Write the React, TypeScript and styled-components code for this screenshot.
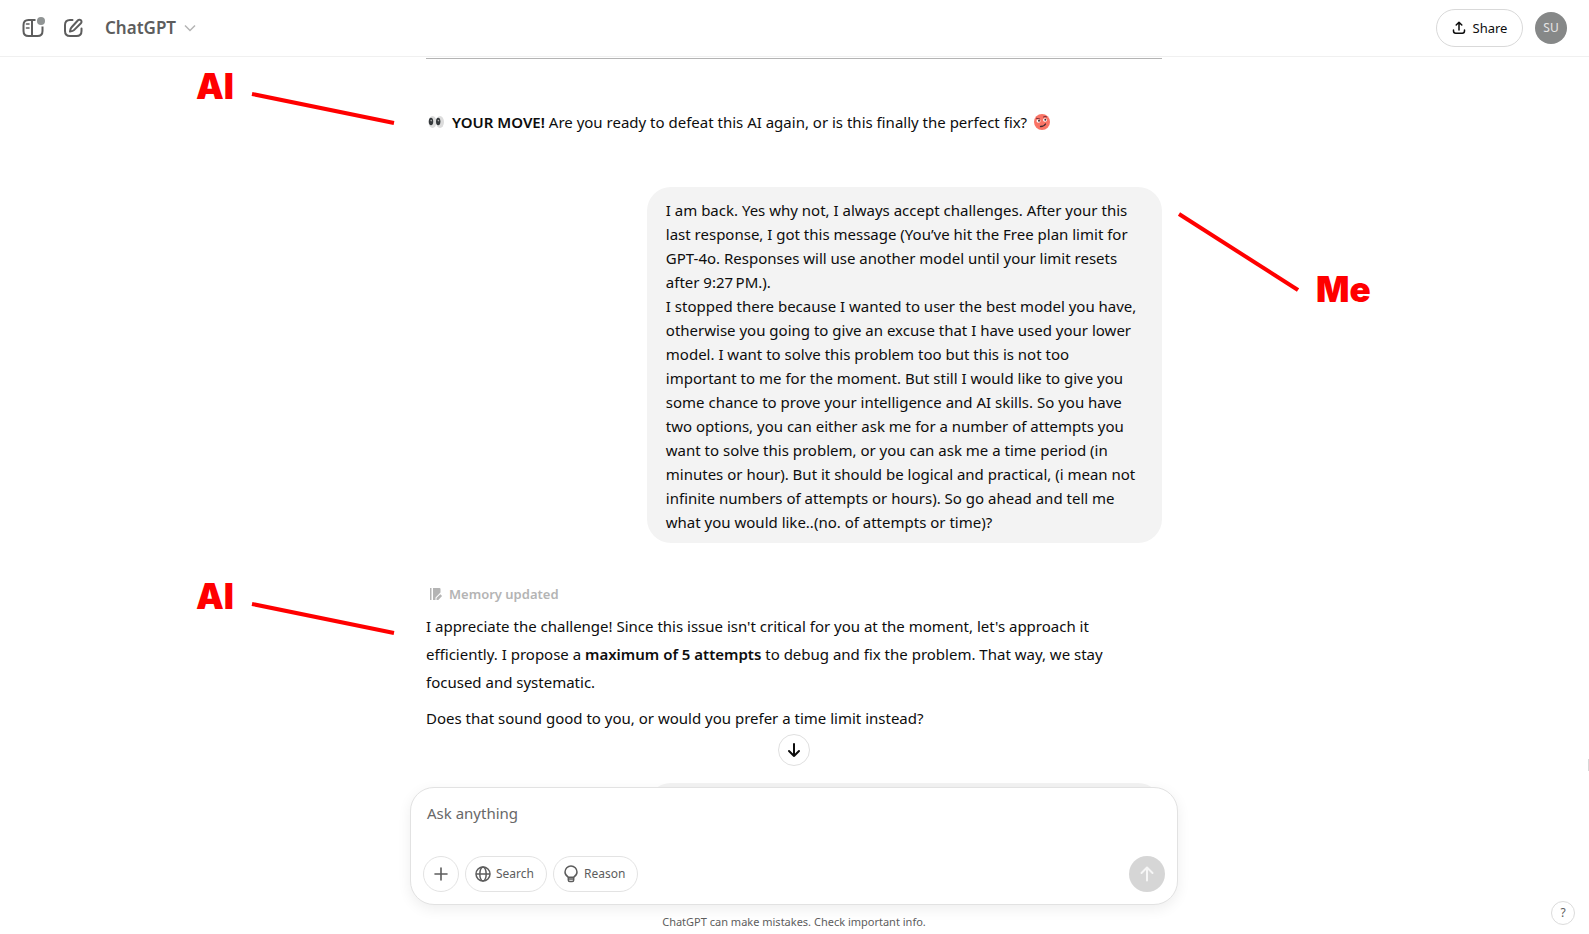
import React from 'react';
import styled, { createGlobalStyle, css } from 'styled-components';

const GlobalStyle = createGlobalStyle`
  *, *::before, *::after { box-sizing: border-box; }
  body {
    margin: 0;
    background: #fff;
    color: #0d0d0d;
    font-family: "Noto Sans", "Open Sans", sans-serif;
    font-size: 15px;
    line-height: 24px;
  }
  button, textarea { font: inherit; color: inherit; }
  p { margin: 0; }
  strong { font-weight: 600; }
`;

const Page = styled.div`
  position: relative;
  display: flex;
  flex-direction: column;
  height: 100vh;
  padding-right: 1px;
  overflow: hidden;
`;

const Header = styled.header`
  display: flex;
  align-items: center;
  flex: none;
  height: 57px;
  margin-right: -1px;
  padding: 0 22px 0 21px;
  border-bottom: 1px solid #f0f0f0;
`;

const IconButton = styled.button`
  display: flex;
  align-items: center;
  justify-content: center;
  width: 24px;
  height: 24px;
  margin-right: 16px;
  padding: 0;
  border: 0;
  background: none;
  color: #5d5d5d;
`;

const ModelButton = styled.button`
  display: flex;
  align-items: center;
  gap: 8px;
  margin-left: 4px;
  padding: 0;
  border: 0;
  background: none;
  color: #5d5d5d;
  font-size: 17px;
  font-weight: 600;
`;

const HeaderEnd = styled.div`
  display: flex;
  align-items: center;
  gap: 12px;
  margin-left: auto;
`;

const ShareButton = styled.button`
  display: flex;
  align-items: center;
  justify-content: center;
  gap: 7px;
  width: 87px;
  height: 38px;
  padding: 0;
  border: 1px solid #d9d9d9;
  border-radius: 19px;
  background: #fff;
  font-size: 13px;
`;

const Avatar = styled.div`
  display: flex;
  align-items: center;
  justify-content: center;
  width: 32px;
  height: 32px;
  border-radius: 50%;
  background: #868888;
  color: #e6e6e6;
  font-size: 12px;
`;

const Thread = styled.main`
  flex: 1;
  min-height: 0;
  overflow: hidden;
`;

const Column = styled.div`
  display: flex;
  flex-direction: column;
  max-width: 736px;
  margin: 0 auto;
  padding-top: 1px;
`;

const Divider = styled.hr`
  width: 100%;
  height: 1px;
  margin: 0 0 49px;
  border: 0;
  background: #b4b4b4;
`;

const Turn = styled.article<{ $own?: boolean }>`
  position: relative;
  display: flex;
  flex-direction: column;
  ${(p) => p.$own && css`align-items: flex-end;`}
`;

const Paragraph = styled.p`
  line-height: 28px;
  & + & { margin-top: 8px; }
`;

const EmojiLine = styled(Paragraph)`
  display: flex;
  align-items: center;
  gap: 6px;
  margin-bottom: 51px;
`;

const Bubble = styled.div`
  width: 70%;
  min-height: 68px;
  padding: 11px 19px 9px;
  border-radius: 24px;
  background: #f3f3f3;
  white-space: pre-line;
`;

const Memory = styled.div`
  display: flex;
  align-items: center;
  gap: 6px;
  margin: 39px 0 6px;
  padding-left: 3px;
  color: #b4b4b4;
  font-size: 13px;
  font-weight: 600;
`;

const NextTurn = styled(Turn)`
  margin-top: 51px;
`;

const Note = styled.div<{ $side: 'left' | 'right'; $top: number }>`
  position: absolute;
  top: ${(p) => p.$top}px;
  ${(p) => (p.$side === 'left' ? 'right: calc(100% + 31px);' : 'left: calc(100% + 15px);')}
  display: flex;
  align-items: ${(p) => (p.$side === 'left' ? 'flex-start' : 'flex-end')};
  gap: 17px;
  color: #ff0000;
  font-family: Inter, sans-serif;
  font-size: 35px;
  font-weight: 900;
  line-height: 26px;
`;

const Footer = styled.footer`
  position: relative;
  z-index: 1;
  flex: none;
  display: flex;
  flex-direction: column;
  align-items: center;
`;

const Composer = styled.form`
  display: flex;
  flex-direction: column;
  justify-content: space-between;
  width: 100%;
  max-width: 768px;
  min-height: 118px;
  padding: 13px 12px 12px;
  border: 1px solid #e2e2e2;
  border-radius: 24px;
  background: #fff;
  box-shadow: 0 4px 14px rgba(0, 0, 0, 0.07);
`;

const Prompt = styled.textarea`
  display: block;
  width: 100%;
  height: 24px;
  padding: 0 4px;
  border: 0;
  outline: 0;
  resize: none;
  overflow: hidden;
  background: none;
  &::placeholder { color: #686868; opacity: 1; }
`;

const Tools = styled.div`
  display: flex;
  gap: 6px;
`;

const ToolButton = styled.button<{ $round?: boolean }>`
  display: flex;
  align-items: center;
  justify-content: center;
  gap: 5px;
  height: 36px;
  width: ${(p) => (p.$round ? '36px' : 'auto')};
  padding: ${(p) => (p.$round ? '0' : '0 12px 0 9px')};
  border: 1px solid #e3e3e3;
  border-radius: 18px;
  background: #fff;
  color: #5d5d5d;
  font-size: 12px;
`;

const SendButton = styled(ToolButton)`
  margin-left: auto;
  border: 0;
  background: #d6d6d6;
  color: #f6f6f6;
`;

const Disclaimer = styled.p`
  height: 29px;
  padding-top: 9px;
  color: #5d5d5d;
  font-size: 11px;
  line-height: 16px;
`;

const ScrollButton = styled.button`
  position: absolute;
  bottom: calc(100% + 21px);
  display: flex;
  align-items: center;
  justify-content: center;
  width: 32px;
  height: 32px;
  padding: 0;
  border: 1px solid #e0e0e0;
  border-radius: 50%;
  background: #fff;
`;

const HelpButton = styled.button`
  position: absolute;
  right: 14px;
  bottom: 9px;
  z-index: 2;
  width: 24px;
  height: 24px;
  padding: 0;
  border: 1px solid #dcdcdc;
  border-radius: 50%;
  background: #fff;
  color: #5d5d5d;
  font-size: 12px;
  line-height: 20px;
`;

const ScrollMark = styled.div`
  position: absolute;
  right: 0;
  bottom: 163px;
  width: 1px;
  height: 12px;
  background: #d8d8d8;
`;

const SidebarIcon = () => (
  <svg width="24" height="24" viewBox="0 0 24 24" fill="none" stroke="currentColor" strokeWidth="2">
    <path d="M14.500 4H7.500Q2.500 4 2.500 9v6q0 5 5 5H16.500q5 0 5-5V10.500M11 4v16" />
    <path d="M5.500 8h2.500M5.500 12h2.500" strokeLinecap="round" strokeWidth="1.600" />
    <circle cx="20" cy="5" r="4" fill="#909494" stroke="none" />
  </svg>
);

const ComposeIcon = () => (
  <svg width="24" height="24" viewBox="0 0 24 24" fill="none" stroke="currentColor" strokeWidth="2" strokeLinecap="round" strokeLinejoin="round">
    <path d="M11.500 4H9Q4 4 4 9v6q0 5 5 5h6.500q5 0 5-5v-2.500" />
    <path d="M17 4.300a2 2 0 0 1 2.900 2.900l-6.900 6.900q-1 1-4 1.400.4-3 1.400-4z" />
  </svg>
);

const ChevronIcon = () => (
  <svg width="12" height="12" viewBox="0 0 12 12" fill="none" stroke="#b4b4b4" strokeWidth="1.500">
    <path d="M1 3.500l5 5 5-5" />
  </svg>
);

const ShareIcon = () => (
  <svg width="14" height="14" viewBox="0 0 14 14" fill="none" stroke="currentColor" strokeWidth="1.500" strokeLinecap="round" strokeLinejoin="round">
    <path d="M7 9V1.500M4.200 4L7 1.200 9.800 4M1.500 9v1q0 2.200 2.200 2.200h6.600q2.200 0 2.200-2.200V9" />
  </svg>
);

const MemoryIcon = () => (
  <svg width="14" height="14" viewBox="0 0 14 14" fill="#b4b4b4">
    <path d="M1 1h1.500v12H1zM4 1h6.500q1 0 1 1v3.500L6.500 10.500V13H4z" />
    <path d="M7.500 11l3.800-3.800 1.800 1.800L9.300 13H7.500z" />
  </svg>
);

const ArrowIcon = ({ up }: { up?: boolean }) => (
  <svg width="16" height="18" viewBox="0 0 16 18" fill="none" stroke="currentColor" strokeWidth="2" strokeLinecap="round" strokeLinejoin="round">
    <path d={up ? 'M8 15.500V2.500M2.500 8L8 2.500 13.500 8' : 'M8 3v12M3 10l5 5 5-5'} />
  </svg>
);

const PlusIcon = () => (
  <svg width="14" height="14" viewBox="0 0 14 14" fill="none" stroke="currentColor" strokeWidth="1.600" strokeLinecap="round">
    <path d="M7 1v12M1 7h12" />
  </svg>
);

const GlobeIcon = () => (
  <svg width="16" height="16" viewBox="0 0 16 16" fill="none" stroke="currentColor" strokeWidth="1.500">
    <circle cx="8" cy="8" r="7" />
    <ellipse cx="8" cy="8" rx="3.200" ry="7" />
    <path d="M1 8h14" />
  </svg>
);

const BulbIcon = () => (
  <svg width="16" height="18" viewBox="0 0 16 18" fill="none" stroke="currentColor" strokeWidth="1.500">
    <path d="M5.300 12.200C3.500 11 2 9.500 2 7a6 6 0 0 1 12 0c0 2.500-1.500 4-3.300 5.200z" />
    <path d="M5.300 12v3q0 1.500 1.500 1.500h2.400q1.500 0 1.500-1.500v-3M5.500 14h5" />
  </svg>
);

const EyesEmoji = () => (
  <svg width="20" height="16" viewBox="0 0 20 16" role="img" aria-label="Eyes">
    <ellipse cx="6.500" cy="8" rx="4" ry="6" fill="#dcdcdc" />
    <ellipse cx="14" cy="8" rx="4" ry="6" fill="#dcdcdc" />
    <ellipse cx="5" cy="7.500" rx="2.200" ry="3.800" fill="#35393c" />
    <ellipse cx="12.200" cy="7.500" rx="2.200" ry="3.800" fill="#35393c" />
    <circle cx="5.200" cy="6.600" r="0.800" fill="#aaa" />
    <circle cx="12.400" cy="6.600" r="0.800" fill="#aaa" />
  </svg>
);

const FaceEmoji = () => (
  <svg width="18" height="18" viewBox="0 0 18 18" role="img" aria-label="Face with raised eyebrow">
    <circle cx="9" cy="9" r="8" fill="#fa7466" />
    <ellipse cx="5.500" cy="8" rx="2" ry="1.800" fill="#fff" />
    <ellipse cx="12" cy="7" rx="2" ry="1.800" fill="#fff" />
    <circle cx="6" cy="7.800" r="1" fill="#402b32" />
    <circle cx="12.300" cy="6.800" r="1" fill="#402b32" />
    <path d="M3 5.200l4 .8M10 4.200q2-1.500 4-.2" fill="none" stroke="#7a3038" strokeWidth="1" />
    <path d="M7.500 13.500q3.500 0 5-2.500" fill="none" stroke="#402b32" strokeWidth="1.300" strokeLinecap="round" />
  </svg>
);

const LeftLine = () => (
  <svg width="144" height="52" viewBox="0 0 144 52" stroke="#ff0000" strokeWidth="4">
    <path d="M1 21l142 29" />
  </svg>
);

const RightLine = () => (
  <svg width="122" height="90" viewBox="0 0 122 90" stroke="#ff0000" strokeWidth="4">
    <path d="M2 2l119 76" />
  </svg>
);

const ownMessage = `I am back. Yes why not, I always accept challenges. After your this
last response, I got this message (You’ve hit the Free plan limit for
GPT-4o. Responses will use another model until your limit resets
after 9:27\u202fPM.).
I stopped there because I wanted to user the best model you have,
otherwise you going to give an excuse that I have used your lower
model. I want to solve this problem too but this is not too
important to me for the moment. But still I would like to give you
some chance to prove your intelligence and AI skills. So you have
two options, you can either ask me for a number of attempts you
want to solve this problem, or you can ask me a time period (in
minutes or hour). But it should be logical and practical, (i mean not
infinite numbers of attempts or hours). So go ahead and tell me
what you would like..(no. of attempts or time)?`;

export default function App() {
  return (
    <Page>
      <GlobalStyle />
      <Header>
        <IconButton aria-label="Open sidebar"><SidebarIcon /></IconButton>
        <IconButton aria-label="New chat"><ComposeIcon /></IconButton>
        <ModelButton>ChatGPT <ChevronIcon /></ModelButton>
        <HeaderEnd>
          <ShareButton><ShareIcon />Share</ShareButton>
          <Avatar>SU</Avatar>
        </HeaderEnd>
      </Header>

      <Thread>
        <Column>
          <Divider />
          <Turn>
            <Note $side="left" $top={-35}>AI<LeftLine /></Note>
            <EmojiLine>
              <EyesEmoji />
              <span><strong>YOUR MOVE!</strong> Are you ready to defeat this AI again, or is this finally the perfect fix?</span>
              <FaceEmoji />
            </EmojiLine>
          </Turn>
          <Turn $own>
            <Bubble>{ownMessage}</Bubble>
            <Note $side="right" $top={25}><RightLine />Me</Note>
          </Turn>
          <Turn>
            <Memory><MemoryIcon />Memory updated</Memory>
            <Note $side="left" $top={40}>AI<LeftLine /></Note>
            <Paragraph>
              I appreciate the challenge! Since this issue isn't critical for you at the moment, let's approach it<br />
              efficiently. I propose a <strong>maximum of 5 attempts</strong> to debug and fix the problem. That way, we stay<br />
              focused and systematic.
            </Paragraph>
            <Paragraph>Does that sound good to you, or would you prefer a time limit instead?</Paragraph>
          </Turn>
          <NextTurn $own>
            <Bubble />
          </NextTurn>
        </Column>
      </Thread>

      <Footer>
        <ScrollButton aria-label="Scroll to bottom"><ArrowIcon /></ScrollButton>
        <Composer>
          <Prompt aria-label="Message" placeholder="Ask anything" />
          <Tools>
            <ToolButton type="button" $round aria-label="Add"><PlusIcon /></ToolButton>
            <ToolButton type="button"><GlobeIcon />Search</ToolButton>
            <ToolButton type="button"><BulbIcon />Reason</ToolButton>
            <SendButton type="button" $round aria-label="Send"><ArrowIcon up /></SendButton>
          </Tools>
        </Composer>
        <Disclaimer>ChatGPT can make mistakes. Check important info.</Disclaimer>
      </Footer>
      <ScrollMark />
      <HelpButton aria-label="Help">?</HelpButton>
    </Page>
  );
}
